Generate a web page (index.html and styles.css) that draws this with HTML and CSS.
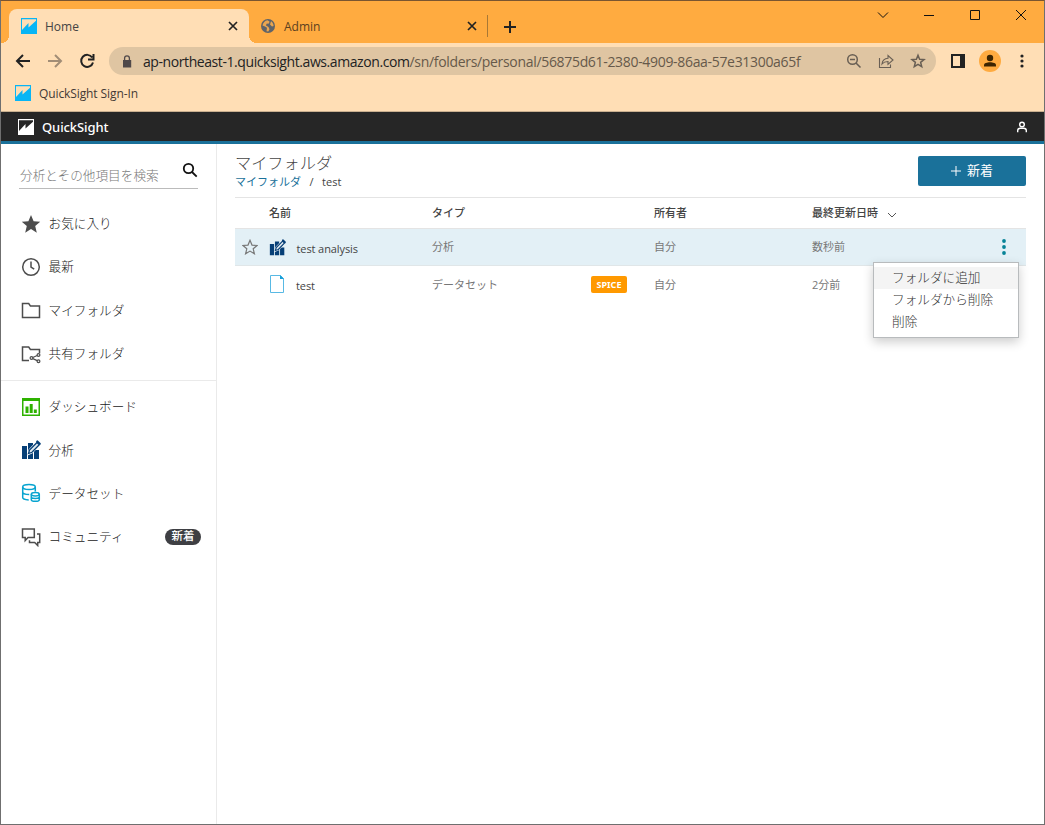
FILE: index.html
```html
<!DOCTYPE html>
<html lang="ja">
<head>
    <meta charset="UTF-8">
    <meta name="viewport" content="width=device-width, initial-scale=1.0">
    <title>Home</title>
    <link rel="stylesheet" href="styles.css">
</head>
<body>
    <!-- Shared icons -->
    <svg class="sprite">
        <symbol id="logo" viewBox="0 0 16 16">
            <path fill="currentColor" fill-rule="evenodd" d="M0 0H16V16H0ZM1 1.200V12L7.500 5V9.500L15 2.800V1.200Z"/>
        </symbol>
        <symbol id="analysis" viewBox="0 0 20 20">
            <path fill="#063f77" d="M1 6h5v13H1zM7 3h5v16H7zM13 10h5v9H13z"/>
            <path d="M7.500 14l1-4L16 2l2.500 2.500L11 12.500z" fill="#063f77" stroke="#fff" stroke-width="2"/>
            <path d="M7.500 13.500l1-3.500L16 2.500l2.300 2.200L11 12.300z" fill="#dfe9f0" stroke="#063f77" stroke-width="1.300"/>
            <path d="M16.300 1.500l2.400 2.300" stroke="#063f77" stroke-width="2.200" stroke-linecap="round"/>
        </symbol>
    </svg>

    <div class="window">
        <div class="tab-strip">
            <div class="tab active">
                <svg class="favicon"><use href="#logo"/></svg>
                <span class="tab-title">Home</span>
                <svg class="close" viewBox="0 0 10 10"><path d="M1 1l8 8M9 1L1 9"/></svg>
            </div>
            <div class="tab">
                <svg class="globe" viewBox="0 0 14 14"><circle cx="7" cy="7" r="7"/><path d="M6.500 1.200C4 1.500 2 3.500 1.500 6.500L4 7.500 6 8.800 5.500 12.200 7.300 12.500 8.500 10.200 7.500 8 5 6.500 5.500 4.800 8 4.500 8.500 2.500zM10 2.200L9 5.500 11 7.500 12.600 7C12.500 5 11.500 3 10 2.200z"/></svg>
                <span class="tab-title">Admin</span>
                <svg class="close" viewBox="0 0 10 10"><path d="M1 1l8 8M9 1L1 9"/></svg>
            </div>
            <svg class="new-tab" viewBox="0 0 12 12"><path d="M6 0v12M0 6h12"/></svg>
            <div class="window-buttons">
                <svg viewBox="0 0 12 12"><path d="M1 3.500l5 5 5-5"/></svg>
                <svg viewBox="0 0 12 12"><path d="M1 6.500h10"/></svg>
                <svg viewBox="0 0 12 12"><path d="M1.500 1.500h9v9h-9z"/></svg>
                <svg viewBox="0 0 12 12"><path d="M1 1l10 10M11 1L1 11"/></svg>
            </div>
        </div>

        <div class="toolbar">
            <svg class="nav-icon" viewBox="0 0 16 16"><path d="M15 8H2M8 2L2 8l6 6"/></svg>
            <svg class="nav-icon disabled" viewBox="0 0 16 16"><path d="M1 8h13M8 2l6 6-6 6"/></svg>
            <svg class="nav-icon" viewBox="0 0 16 16"><path d="M13.200 4.500A6 6 0 1 0 14 9.500M14.500 1v5.500H9"/></svg>
            <div class="address">
                <svg class="lock" viewBox="0 0 10 13"><path d="M1 5h8.200v7.500H1z" fill="#50494a"/><path d="M2.600 5.500V3.300a2.400 2.400 0 0 1 4.800 0v2.200" fill="none" stroke="#50494a" stroke-width="1.300"/></svg>
                <span class="url"><b>ap-northeast-1.quicksight.aws.amazon.com</b>/sn/folders/personal/56875d61-2380-4909-86aa-57e31300a65f</span>
                <div class="address-icons">
                    <svg viewBox="0 0 16 16"><circle cx="6.500" cy="6.500" r="4.800"/><path d="M10 10l4.500 4.500M4 6.500h5"/></svg>
                    <svg class="thin" viewBox="0 0 16 16"><path d="M1.500 5v9.500h11v-3M4 11c.5-4 3-5.500 6-5.700V2.500l5 4.500-5 4.300V8.500C7.500 8.500 5.500 9.200 4 11z"/></svg>
                    <svg viewBox="0 0 16 16"><path d="M8 2.200l1.600 4 4.400.3-3.400 2.800 1.100 4.300L8 11.300l-3.700 2.300 1.100-4.300L2 6.500l4.400-.3z"/></svg>
                </div>
            </div>
            <svg class="panel" viewBox="0 0 14 14"><path fill="#222" fill-rule="evenodd" d="M0 0h14v14H0zM2 2v10h7V2z"/></svg>
            <div class="avatar"><svg viewBox="0 0 14 14"><circle cx="7" cy="4" r="3.200"/><path d="M1 12.500v-1.300C1 9.200 4 8.300 7 8.300s6 .9 6 2.900v1.300z"/></svg></div>
            <svg class="menu-dots" viewBox="0 0 4 14"><circle cx="2" cy="2" r="1.600"/><circle cx="2" cy="7" r="1.600"/><circle cx="2" cy="12" r="1.600"/></svg>
        </div>

        <div class="bookmarks">
            <svg class="favicon"><use href="#logo"/></svg>
            <span>QuickSight Sign-In</span>
        </div>

        <header class="app-header">
            <svg class="app-logo"><use href="#logo"/></svg>
            <span class="app-name">QuickSight</span>
            <svg class="user" viewBox="0 0 12 12"><circle cx="6" cy="3.500" r="2.300"/><path d="M1.700 11.200V9.500C1.700 8 3 7.300 4.300 7.300h3.400c1.300 0 2.600.7 2.600 2.200v1.700"/></svg>
        </header>

        <div class="app">
            <nav class="sidebar">
                <div class="search">
                    <span class="placeholder">分析とその他項目を検索</span>
                    <svg class="search-icon" viewBox="0 0 16 16"><circle cx="6.500" cy="6.500" r="4.700"/><path d="M10 10l4.700 4.700"/></svg>
                </div>
                <ul class="nav-list">
                    <li>
                        <svg viewBox="0 0 20 20"><path fill="#4d4d4d" d="M10 1l2.600 6.200 6.600.5-5 4.400 1.600 6.600-5.800-3.600-5.800 3.600 1.600-6.600-5-4.400 6.600-.5z"/></svg>
                        <span>お気に入り</span>
                    </li>
                    <li>
                        <svg class="line" viewBox="0 0 20 20"><circle cx="10" cy="10" r="8.300"/><path d="M10 4.500V10l3.200 2.200"/></svg>
                        <span>最新</span>
                    </li>
                    <li>
                        <svg class="line" viewBox="0 0 20 20"><path d="M1.500 3.500h6.200l1.700 2.400h9.100v11.600h-17z"/></svg>
                        <span>マイフォルダ</span>
                    </li>
                    <li>
                        <svg class="line" viewBox="0 0 20 20"><path d="M8 16.500H1.500V3h6.200l1.700 2.400h9.100v3.800"/><g stroke-width="1.200"><circle cx="10.500" cy="14" r="1.400"/><circle cx="17.500" cy="11" r="1.400"/><circle cx="17.500" cy="17.300" r="1.400"/><path d="M11.800 13.500l4.400-2M11.800 14.600l4.400 2"/></g></svg>
                        <span>共有フォルダ</span>
                    </li>
                </ul>
                <ul class="nav-list second">
                    <li>
                        <svg viewBox="0 0 20 20"><path fill="#2eb200" fill-rule="evenodd" d="M1 1h18v18H1zM2.500 4v13.500h15V4z"/><path fill="#2eb200" d="M4.500 9.500h3v6.500h-3zM8.700 7h3v9h-3zM12.800 12.500h3V16h-3z"/></svg>
                        <span>ダッシュボード</span>
                    </li>
                    <li>
                        <svg><use href="#analysis"/></svg>
                        <span>分析</span>
                    </li>
                    <li>
                        <svg class="line data" viewBox="0 0 20 20"><ellipse cx="8" cy="4" rx="6.300" ry="2.500"/><path d="M1.700 4v10.500c0 1.300 2.500 2.200 6 2.400M1.700 9c0 1.500 2.500 2.500 6.500 2.500M14.300 4v4.500"/><ellipse cx="14.300" cy="11.200" rx="4" ry="1.700"/><path d="M10.300 11.200v5.500c0 2.200 8 2.200 8 0v-5.500M10.300 14c0 2 8 2 8 0"/></svg>
                        <span>データセット</span>
                    </li>
                    <li>
                        <svg class="line" viewBox="0 0 20 20"><path d="M1.500 2h11.800v8.500H7l-2.800 3v-3H1.500z"/><path d="M16 7h2.700v8.500h-2v3l-3-3H8.500v-2.300"/></svg>
                        <span>コミュニティ</span>
                        <span class="badge">新着</span>
                    </li>
                </ul>
            </nav>

            <main class="content">
                <div class="page-head">
                    <div>
                        <h1>マイフォルダ</h1>
                        <div class="breadcrumb"><a>マイフォルダ</a><span class="slash">/</span><span>test</span></div>
                    </div>
                    <button class="new-btn"><svg viewBox="0 0 10 10"><path d="M5 0v10M0 5h10"/></svg><span>新着</span></button>
                </div>

                <div class="table">
                    <div class="row head">
                        <span></span>
                        <span>名前</span>
                        <span>タイプ</span>
                        <span></span>
                        <span>所有者</span>
                        <span>最終更新日時<svg class="sort" viewBox="0 0 10 10"><path d="M1 3l4 4 4-4"/></svg></span>
                    </div>
                    <div class="row selected">
                        <svg class="star" viewBox="0 0 16 16"><path d="M8 1.300l2 4.800 5 .4-3.800 3.300 1.200 5L8 12.100l-4.400 2.700 1.200-5L1 6.500l5-.4z"/></svg>
                        <div class="name"><svg class="analysis"><use href="#analysis"/></svg><span>test analysis</span></div>
                        <span>分析</span>
                        <span></span>
                        <span>自分</span>
                        <span>数秒前</span>
                        <div class="more">
                            <svg viewBox="0 0 4 16"><circle cx="2" cy="2" r="1.900"/><circle cx="2" cy="8" r="1.900"/><circle cx="2" cy="14" r="1.900"/></svg>
                            <ul class="dropdown">
                                <li class="hover">フォルダに追加</li>
                                <li>フォルダから削除</li>
                                <li>削除</li>
                            </ul>
                        </div>
                    </div>
                    <div class="row">
                        <span></span>
                        <div class="name"><svg class="file" viewBox="0 0 16 20"><path d="M1.500 1.500h10l3 3v14h-13z" fill="#fff" stroke="#58b9e4"/><path d="M11 1l4 4h-4z" fill="#189fd8"/></svg><span>test</span></div>
                        <span>データセット</span>
                        <b class="spice">SPICE</b>
                        <span>自分</span>
                        <span>2分前</span>
                    </div>
                </div>
            </main>
        </div>
    </div>
</body>
</html>
```

FILE: styles.css
```css
* {
    margin: 0;
    padding: 0;
    box-sizing: border-box;
}

body {
    font-family: "Open Sans", "Noto Sans CJK JP", sans-serif;
    color: #444;
    background: #fff;
}

ul {
    list-style: none;
}

svg {
    display: block;
    flex: none;
}

.sprite {
    display: none;
}

.window {
    display: flex;
    flex-direction: column;
    width: 1045px;
    height: 825px;
    border: 1px solid #6f6f6f;
    border-top-color: #7a5530;
    overflow: hidden;
}

/* Browser frame */
.tab-strip {
    display: flex;
    align-items: center;
    height: 42px;
    padding-left: 8px;
    background: #ffab40;
}

.tab {
    display: flex;
    align-items: center;
    align-self: flex-end;
    width: 239px;
    height: 34px;
    padding: 0 10px 0 12px;
    font-size: 12px;
    color: #5b401f;
    border-right: 1px solid #a87835;
    border-image: linear-gradient(transparent 7px, #a87835 7px, #a87835 27px, transparent 27px) 1;
    border-width: 0 1px 0 0;
}

.tab.active {
    position: relative;
    width: 240px;
    padding-right: 11px;
    background: #ffdeb5;
    border: none;
    border-radius: 8px 8px 0 0;
    color: #444;
}

.tab.active::before,
.tab.active::after {
    content: "";
    position: absolute;
    bottom: 0;
    width: 8px;
    height: 8px;
}

.tab.active::before {
    left: -8px;
    background: radial-gradient(circle at 0 0, transparent 8px, #ffdeb5 8px);
}

.tab.active::after {
    right: -8px;
    background: radial-gradient(circle at 100% 0, transparent 8px, #ffdeb5 8px);
}

.favicon {
    width: 16px;
    height: 16px;
    margin-right: 8px;
    color: #08b5f5;
}

.globe {
    width: 14px;
    height: 14px;
    margin-right: 9px;
    fill: #5f6368;
}

.globe path {
    fill: #e9a550;
}

.tab-title {
    flex: 1;
    padding-top: 1px;
}

.close {
    width: 10px;
    height: 10px;
    stroke: #222;
    stroke-width: 1.7;
}

.new-tab {
    width: 12px;
    height: 12px;
    margin: 9px 0 0 16px;
    stroke: #222;
    stroke-width: 2;
}

.window-buttons {
    display: flex;
    gap: 34px;
    margin: -14px 17px 0 auto;
}

.window-buttons svg {
    width: 12px;
    height: 12px;
    fill: none;
    stroke: #111;
}

.toolbar {
    display: flex;
    align-items: center;
    height: 36px;
    padding: 0 20px 0 14px;
    background: #ffdeb5;
}

.nav-icon {
    width: 16px;
    height: 16px;
    margin-right: 16px;
    fill: none;
    stroke: #222;
    stroke-width: 2;
}

.nav-icon.disabled {
    stroke: #a28d76;
}

.address {
    display: flex;
    align-items: center;
    width: 827px;
    height: 28px;
    margin-left: -2px;
    padding: 0 10px 0 13px;
    border-radius: 14px;
    background: #dfc5a2;
}

.lock {
    width: 10px;
    height: 13px;
    margin-right: 11px;
}

.url {
    font-size: 14px;
    letter-spacing: -0.32px;
    white-space: nowrap;
    color: #66594a;
}

.url b {
    font-weight: 400;
    letter-spacing: -0.42px;
    color: #222;
}

.address-icons {
    display: flex;
    gap: 16px;
    margin-left: auto;
}

.address-icons svg {
    width: 16px;
    height: 16px;
    fill: none;
    stroke: #695f54;
    stroke-width: 1.5;
}

.address-icons svg.thin {
    stroke-width: 1.1;
}

.panel {
    width: 14px;
    height: 14px;
    margin-left: 15px;
}

.avatar {
    display: flex;
    align-items: center;
    justify-content: center;
    width: 22px;
    height: 22px;
    margin-left: 14px;
    border-radius: 50%;
    background: #ffab40;
}

.avatar svg {
    width: 14px;
    height: 14px;
    fill: #3c2400;
}

.menu-dots {
    width: 4px;
    height: 14px;
    margin-left: auto;
    fill: #222;
}

.bookmarks {
    display: flex;
    align-items: center;
    height: 33px;
    padding: 0 0 4px 14px;
    font-size: 12px;
    letter-spacing: -0.1px;
    color: #443a35;
    background: #ffdeb5;
    border-bottom: 1px solid #c8af8f;
}

/* Application */
.app-header {
    display: flex;
    align-items: center;
    height: 32px;
    padding: 0 16px 0 17px;
    background: #262626;
    border-bottom: 3px solid #1a719a;
}

.app-logo {
    width: 16px;
    height: 16px;
    margin-right: 8px;
    color: #fff;
}

.app-name {
    font-family: "Noto Sans", sans-serif;
    font-size: 13px;
    font-weight: 500;
    letter-spacing: -0.1px;
    color: #fff;
}

.user {
    width: 12px;
    height: 12px;
    margin-left: auto;
    fill: none;
    stroke: #fff;
    stroke-width: 1.4;
}

.app {
    display: flex;
    flex: 1;
}

.sidebar {
    width: 216px;
    border-right: 1px solid #eaeaea;
    font-size: 12.65px;
    font-weight: 300;
    color: #222;
}

.search {
    display: flex;
    justify-content: space-between;
    width: 179px;
    height: 27px;
    margin: 18px 0 13px 18px;
    padding-left: 1px;
    border-bottom: 1px solid #bbb;
}

.placeholder {
    line-height: 27px;
    color: #777;
}

.search-icon {
    width: 16px;
    height: 16px;
    fill: none;
    stroke: #111;
    stroke-width: 1.8;
}

.nav-list li {
    display: flex;
    align-items: center;
    height: 43.3px;
    padding: 0 15px 0 20px;
}

.nav-list li > span {
    margin-bottom: 2px;
}

.nav-list svg {
    width: 20px;
    height: 20px;
    margin-right: 7.5px;
}

.nav-list .line {
    fill: none;
    stroke: #4d4d4d;
    stroke-width: 1.5;
}

.nav-list .data {
    stroke: #08a4d0;
}

.nav-list.second {
    margin-top: 5px;
    padding-top: 4px;
    border-top: 1px solid #eaeaea;
}

.nav-list .badge {
    width: 36px;
    height: 16px;
    margin: 0 0 0 auto;
    border-radius: 8px;
    background: #3e3f43;
    color: #fff;
    font-size: 11.5px;
    font-weight: 500;
    line-height: 14px;
    text-align: center;
}

.content {
    flex: 1;
    padding: 0 18px;
}

.page-head {
    display: flex;
    justify-content: space-between;
    height: 53px;
    padding-top: 9px;
}

h1 {
    font-size: 16.2px;
    font-weight: 300;
    line-height: 20px;
    color: #444;
}

.breadcrumb {
    font-size: 11px;
    line-height: 18px;
}

.breadcrumb a {
    color: #1a719a;
}

.slash {
    margin: 0 8.500px;
}

.new-btn {
    display: flex;
    align-items: center;
    justify-content: center;
    gap: 6px;
    width: 108px;
    height: 30px;
    margin-top: 3px;
    border: none;
    border-radius: 2px;
    background: #1a719a;
    color: #fff;
    font-family: inherit;
    font-size: 13px;
}

.new-btn span {
    margin-bottom: 4px;
}

.new-btn svg {
    width: 10px;
    height: 10px;
    stroke: #fff;
}

.row {
    position: relative;
    display: grid;
    grid-template-columns: 34px 163px 159px 63px 158px 1fr;
    align-items: center;
    height: 37px;
    font-size: 11px;
    color: #777;
}

.row > span {
    margin-bottom: 2px;
}

.row.head {
    height: 32px;
    border-top: 1px solid #e4e4e4;
    border-bottom: 1px solid #e4e4e4;
    font-weight: 500;
    color: #444;
}

.row.selected {
    background: #e3f0f6;
    border-bottom: 1px solid #e0e6e8;
}

.sort {
    display: inline-block;
    width: 10px;
    height: 10px;
    margin-left: 9px;
    vertical-align: -3px;
    fill: none;
    stroke: #555;
}

.star {
    width: 16px;
    height: 16px;
    margin-left: 7px;
    fill: none;
    stroke: #777;
    stroke-width: 1.2;
}

.name {
    display: flex;
    align-items: center;
    color: #444;
    letter-spacing: -0.1px;
}

.name span {
    margin-top: 2px;
}

.name .analysis {
    width: 17px;
    height: 17px;
    margin-right: 10.5px;
}

.name .file {
    width: 16px;
    height: 20px;
    margin: -1px 11px 0 0;
}

.spice {
    width: 36px;
    height: 17px;
    border-radius: 2px;
    background: #ff9900;
    color: #fff;
    font-family: "Noto Sans", sans-serif;
    font-size: 9px;
    line-height: 17px;
    text-align: center;
}

.more {
    position: absolute;
    top: 10px;
    right: 20px;
}

.more svg {
    width: 4px;
    height: 16px;
    fill: #078397;
}

.dropdown {
    position: absolute;
    top: 23px;
    right: -13px;
    z-index: 1;
    width: 146px;
    height: 76px;
    padding-top: 4px;
    background: #fff;
    border: 1px solid #b8bbbd;
    box-shadow: 0 4px 10px rgba(0, 0, 0, 0.2);
    font-size: 12.65px;
    font-weight: 300;
    color: #333;
}

.dropdown li {
    height: 22px;
    padding-left: 18px;
    line-height: 20px;
}

.dropdown .hover {
    background: #f4f4f4;
}
```
